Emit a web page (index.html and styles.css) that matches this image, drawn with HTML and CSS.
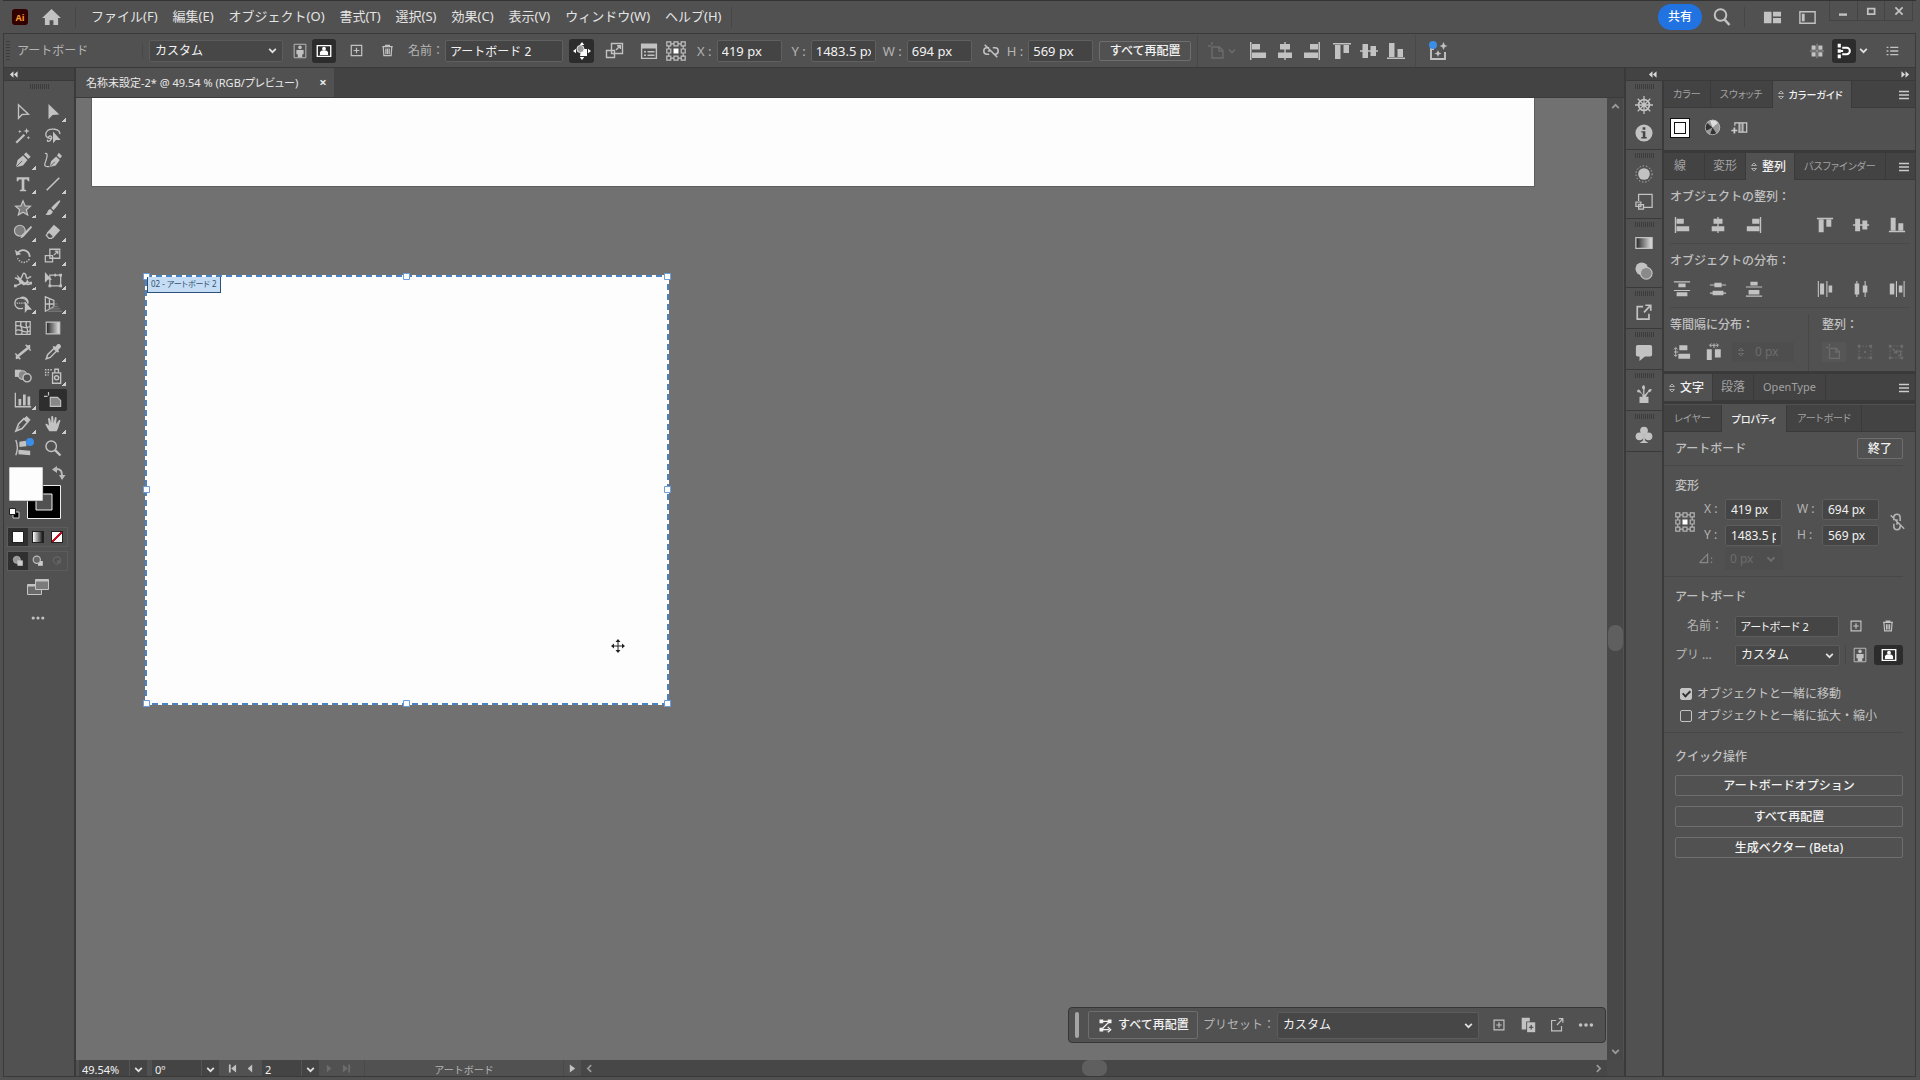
FILE: index.html
```html
<!DOCTYPE html>
<html lang="ja">
<head>
<meta charset="utf-8">
<title>名称未設定-2</title>
<link rel="stylesheet" href="styles.css">
</head>
<body>
<svg class="sprite" aria-hidden="true">
  <defs>
    <linearGradient id="fade"><stop offset="0" stop-color="#222"/><stop offset="1" stop-color="#e6e6e6"/></linearGradient>
  </defs>
  <symbol id="chev" viewBox="0 0 10 10"><path d="M2 3.5l3 3 3-3" fill="none" stroke="currentColor" stroke-width="1.6"/></symbol>
  <symbol id="plus" viewBox="0 0 20 20"><path d="M4.500 4.500h11v11h-11zM10 7v6M7 10h6" fill="none" stroke="currentColor" stroke-width="1.300"/></symbol>
  <symbol id="trash" viewBox="0 0 20 20"><path d="M4.500 6h11M8 6V4.500h4V6M5.500 6l.7 9.500h7.600l.7-9.500M8.300 8v6M10 8v6M11.800 8v6" fill="none" stroke="currentColor" stroke-width="1.300"/></symbol>
  <symbol id="portrait" viewBox="0 0 20 20"><path d="M3.500 2.500h13v15h-13z" fill="none" stroke="currentColor"/><circle cx="10" cy="6" r="2" fill="currentColor"/><path d="M6 9h8v4.500h-1.500V17h-5v-3.500H6z" fill="currentColor"/></symbol>
  <symbol id="landscape" viewBox="0 0 20 20"><path d="M2.500 4h15v12h-15z" fill="none" stroke="currentColor" stroke-width="1.500"/><circle cx="10" cy="7.500" r="2.100" fill="currentColor"/><path d="M5.500 14.500v-3.500l2-1.500h5l2 1.500v3.500z" fill="currentColor"/></symbol>
  <symbol id="moveart" viewBox="0 0 20 20"><path d="M10 1l2.300 3H7.700zM10 19l2.300-3H7.700zM1 10l3-2.300v4.600zM19 10l-3-2.300v4.600z" fill="currentColor"/><path d="M9 8h6v7H8z" fill="currentColor"/><circle cx="8.500" cy="8" r="3.600" fill="#999" stroke="currentColor" stroke-width=".8"/></symbol>
  <symbol id="scale" viewBox="0 0 20 20"><path d="M6.500 2.500h11v10h-11zM1.500 9.500h8v7h-8zM11 9l4-4M12 4.700h3.400V8" fill="none" stroke="currentColor" stroke-width="1.400"/></symbol>
  <symbol id="dialog" viewBox="0 0 20 20"><path d="M2 2.500h16v5H2z" fill="currentColor"/><path d="M2.600 3v14.400h14.800V3M5 10.800h2M5 14.200h2M8.500 10.800h7M8.500 14.200h7" fill="none" stroke="currentColor" stroke-width="1.400"/></symbol>
  <symbol id="refpoint" viewBox="0 0 20 20"><path d="M.8 .8h4v4h-4zM8 .8h4v4H8zM15.200 .8h4v4h-4zM.8 8h4v4h-4zM15.200 8h4v4h-4zM.8 15.200h4v4h-4zM8 15.200h4v4H8zM15.200 15.200h4v4h-4zM4.800 2.800H8M12 2.800h3.200M4.800 17.200H8M12 17.200h3.200M2.800 4.800V8M2.800 12v3.200M17.200 4.800V8M17.200 12v3.200" fill="none" stroke="currentColor" stroke-width="1.200"/><path d="M7.500 7.500h5v5h-5z" fill="#fff"/></symbol>
  <symbol id="unlink" viewBox="0 0 20 20"><path d="M8 6.500H5.500a3.500 3.500 0 0 0 0 7H8M12 6.500h2.500a3.500 3.500 0 0 1 0 7H13M6.500 10H9M3 3l14 14" fill="none" stroke="currentColor" stroke-width="1.700"/></symbol>
  <symbol id="unlinkv" viewBox="0 0 20 20"><path d="M6.500 8V5a3.500 3.500 0 0 1 7 0v4M6.500 12v3a3.500 3.500 0 0 0 7 0v-1M10 7v6M3 2.500l15 15" fill="none" stroke="currentColor" stroke-width="1.700"/></symbol>
  <symbol id="toart" viewBox="0 0 20 20"><path d="M5 1v3M1 5h3M5 6h7.500l3.500 3.500v7.500H5zM12 6v4h4" fill="none" stroke="currentColor" stroke-width="1.400"/></symbol>
  <symbol id="al" viewBox="0 0 20 20"><path d="M2 1h1.500v18H2zM4 3h8v5.500H4zM4 11.500h14V17H4z" fill="currentColor"/></symbol>
  <symbol id="ac" viewBox="0 0 20 20"><path d="M9.300 1h1.400v18H9.300zM5 3h10v5.500H5zM3 11.500h14V17H3z" fill="currentColor"/></symbol>
  <symbol id="ar" viewBox="0 0 20 20"><path d="M16.500 1H18v18h-1.500zM8 3h8v5.500H8zM2 11.500h14V17H2z" fill="currentColor"/></symbol>
  <symbol id="at" viewBox="0 0 20 20"><path d="M1 2h18v1.500H1zM3 4h5.500v14H3zM11.500 4H17v8h-5.500z" fill="currentColor"/></symbol>
  <symbol id="am" viewBox="0 0 20 20"><path d="M1 9.300h18v1.400H1zM3.500 3H9v14H3.500zM11.500 5H17v10h-5.500z" fill="currentColor"/></symbol>
  <symbol id="ab" viewBox="0 0 20 20"><path d="M1 16.500h18V18H1zM3 2h5.500v14H3zM11.500 8H17v8h-5.500z" fill="currentColor"/></symbol>
  <symbol id="dt" viewBox="0 0 20 20"><path d="M1 1.500h18v1.200H1zM1 11h18v1.200H1zM6 4h8v4H6zM4 13.500h12v4.500H4z" fill="currentColor"/></symbol>
  <symbol id="dm" viewBox="0 0 20 20"><path d="M1 5h18v1.200H1zM1 14h18v1.200H1zM6 3h8v5H6zM4 12h12v5H4z" fill="currentColor"/></symbol>
  <symbol id="db" viewBox="0 0 20 20"><path d="M1 7.200h18v1.200H1zM1 17.300h18v1.200H1zM6 2h8v4H6zM4 11h12v5H4z" fill="currentColor"/></symbol>
  <symbol id="dl" viewBox="0 0 20 20"><path d="M2 1h1.200v18H2zM11.500 1h1.200v18h-1.200zM4.500 4h4.500v12H4.500zM14 6h4v8h-4z" fill="currentColor"/></symbol>
  <symbol id="dc" viewBox="0 0 20 20"><path d="M4.800 1H6v18H4.800zM14 1h1.200v18H14zM3 4h5v12H3zM12 6h5v8h-5z" fill="currentColor"/></symbol>
  <symbol id="dr" viewBox="0 0 20 20"><path d="M8.800 1H10v18H8.800zM17.300 1h1.200v18h-1.200zM2 4h5v12H2zM12 6h4v8h-4z" fill="currentColor"/></symbol>
  <symbol id="sv" viewBox="0 0 20 20"><path d="M7 2.500h9v5.500H7zM6 12h13v5.500H6z" fill="currentColor"/><path d="M3 5.500v9M1 7l2-2 2 2M1 13l2 2 2-2M1 10h5" fill="none" stroke="currentColor"/></symbol>
  <symbol id="sh" viewBox="0 0 20 20"><path d="M2 7h5.500v12H2zM11 7h6.500v9H11z" fill="currentColor"/><path d="M5.500 2.500h9M7 .5l-2 2 2 2M13 .5l2 2-2 2M10 .5v5" fill="none" stroke="currentColor"/></symbol>
  <symbol id="dots" viewBox="0 0 20 20"><circle cx="4" cy="10" r="2" fill="currentColor"/><circle cx="10" cy="10" r="2" fill="currentColor"/><circle cx="16" cy="10" r="2" fill="currentColor"/></symbol>
  <symbol id="burger" viewBox="0 0 20 20"><path d="M5 6.500h10M5 10h10M5 13.500h10" stroke="currentColor" stroke-width="1.300"/></symbol>
  <symbol id="export" viewBox="0 0 20 20"><path d="M9 4H2.500v14h13v-6M10 10.500l6.500-7M11.500 2.500h6V8.500" fill="none" stroke="currentColor" stroke-width="1.900"/></symbol>
  <symbol id="left2" viewBox="0 0 10 10"><path d="M5 1.500v7L1 5zM9.500 1.500v7l-4-3.500z" fill="currentColor"/></symbol>
  <symbol id="right2" viewBox="0 0 10 10"><path d="M5 1.500v7L9 5zM.5 1.500v7l4-3.500z" fill="currentColor"/></symbol>
  <symbol id="updown" viewBox="0 0 8 12"><path d="M1.500 4.500L4 2l2.500 2.500zM1.500 7.500L4 10l2.500-2.500z" fill="none" stroke="currentColor"/></symbol>
  <symbol id="dotgrid" viewBox="0 0 20 20"><path d="M3.500 3.500h13v13h-13z" fill="none" stroke="currentColor" stroke-dasharray="2 1.500"/><path d="M2 2h3v3H2zM15 2h3v3h-3zM2 15h3v3H2zM15 15h3v3h-3zM9 9h2v2H9z" fill="currentColor"/></symbol>
  <symbol id="keyobj" viewBox="0 0 20 20"><path d="M3.500 3.500h13v13h-13z" fill="none" stroke="currentColor" stroke-dasharray="2 1.500"/><path d="M2 2h3v3H2zM15 2h3v3h-3zM2 15h3v3H2zM15 15h3v3h-3z" fill="currentColor"/><path d="M6 6l5 5M11 7.500V11H7.500M12 9h3v5h-3" fill="none" stroke="currentColor" stroke-width="1.500"/></symbol>
</svg>

<div class="window">
  <header class="titlebar">
    <svg class="logo" viewBox="0 0 16 16"><rect width="16" height="16" rx="3" fill="#300"/><text x="8" y="11.500" text-anchor="middle" class="logo-text">Ai</text></svg>
    <button class="ic home" aria-label="ホーム"><svg viewBox="0 0 20 18"><path d="M10 0l10 9.500h-3V17h-5v-5H8v5H3V9.500H0z" fill="currentColor"/></svg></button>
    <nav class="menu">
      <button>ファイル(F)</button><button>編集(E)</button><button>オブジェクト(O)</button><button>書式(T)</button><button>選択(S)</button><button>効果(C)</button><button>表示(V)</button><button>ウィンドウ(W)</button><button>ヘルプ(H)</button>
    </nav>
    <span class="grow"></span>
    <button class="share">共有</button>
    <button class="ic search" aria-label="検索"><svg viewBox="0 0 20 20"><circle cx="8.500" cy="8" r="5.800" fill="none" stroke="currentColor" stroke-width="2"/><path d="M12.500 12.500l5 5.500" stroke="currentColor" stroke-width="2.600"/></svg></button>
    <div class="layouts">
      <button class="ic" aria-label="ワークスペース"><svg viewBox="0 0 20 20"><path d="M1 4h8v12H1zM10.500 4H19v5h-8.500zM10.500 10.500H19V16h-8.500z" fill="currentColor"/></svg></button>
      <button class="ic" aria-label="パネル"><svg viewBox="0 0 20 20"><path d="M2 4h16v12H2z" fill="none" stroke="currentColor" stroke-width="1.500"/><path d="M4 6h3v8H4z" fill="currentColor"/></svg></button>
    </div>
    <div class="wincontrols">
      <button aria-label="最小化"><svg viewBox="0 0 20 20"><path d="M5 13h10v3H5z" fill="currentColor"/></svg></button>
      <button aria-label="最大化"><svg viewBox="0 0 20 20"><path d="M6 7h8.500v7H6z" fill="none" stroke="currentColor" stroke-width="2.200"/></svg></button>
      <button aria-label="閉じる"><svg viewBox="0 0 20 20"><path d="M5.500 5.500l9 9M14.500 5.500l-9 9" stroke="currentColor" stroke-width="2.200"/></svg></button>
    </div>
  </header>

  <div class="options">
    <span class="vgrip"></span>
    <span class="opt-title">アートボード</span>
    <div class="select preset"><select aria-label="プリセット"><option>カスタム</option></select><svg class="chev"><use href="#chev"/></svg></div>
    <div class="orient"><button class="ic" aria-label="縦"><svg><use href="#portrait"/></svg></button><button class="ic on" aria-label="横"><svg><use href="#landscape"/></svg></button></div>
    <button class="ic add" aria-label="新規"><svg><use href="#plus"/></svg></button>
    <button class="ic bin" aria-label="削除"><svg><use href="#trash"/></svg></button>
    <label class="field name">名前：<input value="アートボード 2"></label>
    <div class="opt-icons">
      <button class="ic on" aria-label="移動"><svg><use href="#moveart"/></svg></button>
      <button class="ic" aria-label="拡大"><svg><use href="#scale"/></svg></button>
      <div class="pair">
        <button class="ic" aria-label="オプション"><svg><use href="#dialog"/></svg></button>
        <button class="ic" aria-label="基準点"><svg><use href="#refpoint"/></svg></button>
      </div>
    </div>
    <div class="coords">
      <label class="field">X :<input value="419 px"></label>
      <label class="field">Y :<input value="1483.5 px"></label>
      <label class="field tight">W :<input value="694 px"></label>
      <button class="ic" aria-label="縦横比"><svg><use href="#unlink"/></svg></button>
      <label class="field tight">H :<input value="569 px"></label>
    </div>
    <button class="btn rearrange">すべて再配置</button>
    <div class="aligners">
      <button class="ic faint" aria-label="整列先"><svg><use href="#toart"/></svg><svg class="chev"><use href="#chev"/></svg></button>
      <button class="ic" aria-label="左"><svg><use href="#al"/></svg></button>
      <button class="ic" aria-label="中央"><svg><use href="#ac"/></svg></button>
      <button class="ic" aria-label="右"><svg><use href="#ar"/></svg></button>
      <button class="ic" aria-label="上"><svg><use href="#at"/></svg></button>
      <button class="ic" aria-label="中"><svg><use href="#am"/></svg></button>
      <button class="ic" aria-label="下"><svg><use href="#ab"/></svg></button>
    </div>
    <button class="ic generate" aria-label="生成"><svg viewBox="0 0 20 20"><path d="M6 8H3v10h14v-7" fill="none" stroke="currentColor" stroke-width="1.900"/><path d="M10 9l1 2.500 2.500 1-2.500 1-1 2.500-1-2.500-2.500-1 2.500-1zM15.500 1l1.300 3 2.700 1-2.700 1-1.300 3-1.300-3-2.700-1 2.700-1z" fill="currentColor"/><circle cx="5" cy="4" r="4" fill="#3b8ee8"/></svg></button>
    <span class="grow"></span>
    <div class="opt-right">
      <button class="ic" aria-label="グリッド"><svg viewBox="0 0 20 20"><path d="M4 4h4.500v4.500H4zM11.500 4H16v4.500h-4.500zM4 11.500h4.500V16H4zM11.500 11.500H16V16h-4.500z" fill="currentColor"/><path d="M10 2v16M2 10h16" stroke="currentColor" stroke-width=".7"/></svg></button>
      <button class="ic on" aria-label="スナップ"><svg viewBox="0 0 20 20"><path d="M3 2h3.500v4H3zM3 8h3.500v4H3zM3 14h3.500v4H3z" fill="currentColor"/><path d="M8 6.500h5a3.500 3.500 0 0 1 0 7H8M6 10h3" fill="none" stroke="currentColor" stroke-width="2.200"/></svg></button>
      <svg class="chev"><use href="#chev"/></svg>
      <button class="ic list" aria-label="リスト"><svg viewBox="0 0 20 20"><path d="M4 6h2M4 10h2M4 14h2M8 6h9M8 10h9M8 14h9" stroke="currentColor" stroke-width="1.500"/></svg></button>
    </div>
  </div>

  <div class="work">
    <aside class="tools">
      <div class="dock-head"><svg class="dbl"><use href="#left2"/></svg></div>
      <span class="grip"></span>
      <div class="toolgrid">
        <button aria-label="選択"><svg viewBox="0 0 20 20"><path d="M5 2v15l4-4.200 7-.3z" fill="none" stroke="currentColor" stroke-width="1.500"/></svg></button>
        <button class="more" aria-label="ダイレクト選択"><svg viewBox="0 0 20 20"><path d="M5 1v17l4.500-4.800 7.500-.4z" fill="currentColor"/></svg></button>
        <button aria-label="自動選択"><svg viewBox="0 0 20 20"><path d="M2.500 17.500l9-9" stroke="currentColor" stroke-width="2.400"/><path d="M14 1l.9 2.600L17.500 4.500l-2.600.9L14 8l-.9-2.600-2.600-.9 2.600-.9zM6.500 3l.6 1.400 1.400.6-1.400.6-.6 1.400-.6-1.400L4.500 5l1.400-.6zM16 10l.6 1.400 1.400.6-1.400.6-.6 1.400-.6-1.400L14 12l1.400-.6z" fill="currentColor"/></svg></button>
        <button aria-label="なげなわ"><svg viewBox="0 0 20 20"><path d="M9 12.500C4 13.500 1.500 10.500 2 7.500 3 3 8 2 12 2.500c4 .5 6 3 5.500 5.500M4.500 12c2-4 5-1.500 3.500 1.500S3 17 4 14" fill="none" stroke="currentColor" stroke-width="1.500"/><path d="M10 5v13l3.300-3.600h5.200z" fill="currentColor"/></svg></button>
        <button class="more" aria-label="ペン"><svg viewBox="0 0 20 20"><path d="M2 18l2-8 6-5 5 5-5 6zM11 4l2.500-2.500 5 5L16 9z" fill="currentColor"/><path d="M2.500 17.500L9 11" stroke="#515151"/></svg></button>
        <button aria-label="曲線"><svg viewBox="0 0 20 20"><path d="M6 18l2-7 5.500-5 4 4-4.500 6zM14.500 5l2-3L20 5.500l-2.200 2.800z" fill="currentColor"/><path d="M1 3c5-2 1 8 0 11s2 4 5 3" fill="none" stroke="currentColor" stroke-width="1.400"/><path d="M6.500 17.500L12 12" stroke="#515151"/></svg></button>
        <button class="more" aria-label="文字"><svg viewBox="0 0 20 20"><path d="M3 2.500h14V7h-1.500L14.500 5h-3v11l2 .7V18h-7v-1.300l2-.7V5h-3l-1 2H3z" fill="currentColor"/></svg></button>
        <button class="more" aria-label="直線"><svg viewBox="0 0 20 20"><path d="M3 17L17 3" stroke="currentColor" stroke-width="1.800"/></svg></button>
        <button class="more" aria-label="スター"><svg viewBox="0 0 20 20"><path d="M10 2l2.300 5.600 6 .4-4.600 3.900 1.500 5.900L10 14.600l-5.200 3.200 1.500-5.900L1.700 8l6-.4z" fill="#7c7c7c" stroke="currentColor" stroke-width="1.300"/></svg></button>
        <button class="more" aria-label="ブラシ"><svg viewBox="0 0 20 20"><path d="M18 1.500c1 1-5 9-7.500 11L8 10C10 7 17 .8 18 1.500zM7 11l2.800 2.800C9 17.500 5 18.500 1.500 17.500 4 16 3.500 12 7 11z" fill="currentColor"/></svg></button>
        <button class="more" aria-label="Shaper"><svg viewBox="0 0 20 20"><circle cx="6.500" cy="8.500" r="6" fill="#7c7c7c" stroke="currentColor" stroke-width="1.300"/><path d="M19 3l1 2-8 9c-1 1.500-3 3-5 3 1-1 1-3 2.500-4.500z" fill="currentColor"/></svg></button>
        <button class="more" aria-label="消しゴム"><svg viewBox="0 0 20 20"><path d="M11 2l7 6-8 9-7-6z" fill="currentColor"/><path d="M5.500 10l5 4.500-2 2.500H5.500L2.500 13.500z" fill="#515151" stroke="currentColor" stroke-width="1.400"/></svg></button>
        <button class="more" aria-label="回転"><svg viewBox="0 0 20 20"><path d="M4 7c4-6 13-4 13.500 4" fill="none" stroke="currentColor" stroke-width="2"/><path d="M1 3l1.500 6.500L8 8z" fill="currentColor"/><path d="M17 13.500c-3 5-10 5-13-1" fill="none" stroke="currentColor" stroke-width="1.600" stroke-dasharray="1.500 1.500"/></svg></button>
        <button class="more" aria-label="拡大縮小"><svg><use href="#scale"/></svg></button>
        <button class="more" aria-label="線幅"><svg viewBox="0 0 20 20"><path d="M1 8c3-1 3 3 6 1S9 1 12 3s0 5 3 5 2-3 4-1M2 16c4 0 4-3 8-3s4 4 8 1" fill="none" stroke="currentColor" stroke-width="1.600"/><path d="M3 4l9 9c2-1 3-3 2-5l3 5-6 3-5-3z" fill="currentColor"/><path d="M0 15h3v3H0zM17 12h3v3h-3z" fill="currentColor"/></svg></button>
        <button class="more" aria-label="自由変形"><svg viewBox="0 0 20 20"><path d="M6.500 4.500h12v12h-12z" fill="none" stroke="currentColor" stroke-width="1.400"/><path d="M1 1v12l3.500-3.500L9 10zM17 3h3v3h-3zM17 15h3v3h-3zM5 15h3v3H5zM11.500 3h2v3h-2z" fill="currentColor"/></svg></button>
        <button class="more" aria-label="シェイプ形成"><svg viewBox="0 0 20 20"><path d="M7 3.500c4-3 9 1 8.500 6M10 14.500c-5 2-9-1-9-5C1 6 3 3.500 7 3.500s8 2 8.500 6" fill="none" stroke="currentColor" stroke-width="1.500"/><path d="M3 9h9" stroke="currentColor" stroke-width="1.500" stroke-dasharray="1.500 1"/><path d="M12 7v13l3-3.500h5z" fill="currentColor"/></svg></button>
        <button class="more" aria-label="遠近グリッド"><svg viewBox="0 0 20 20"><path d="M1.500 2v16L11 13V6zM1.500 10H11M6 4v11.500" fill="none" stroke="currentColor" stroke-width="1.400"/><path d="M12 10h3M9 13h7M5 15.500h13M4 18h16" stroke="#888"/></svg></button>
        <button aria-label="メッシュ"><svg viewBox="0 0 20 20"><path d="M2 3h16v14H2zM8 3c-3 5 4 9 0 14M14 3c-3 5 4 9 0 14M2 8c5-3 9 5 16 0M2 13c5-4 9 5 16 0" fill="none" stroke="currentColor" stroke-width="1.400"/></svg></button>
        <button aria-label="グラデーション"><svg viewBox="0 0 20 20"><path d="M2.500 3.500h15v13h-15z" fill="url(#fade)" stroke="currentColor" stroke-width="1.300"/></svg></button>
        <button aria-label="寸法"><svg viewBox="0 0 20 20"><path d="M4.500 14.500l11-9" stroke="currentColor" stroke-width="3"/><path d="M1.500 11.500l5.500 6.500M13 2l5.500 6.500" stroke="currentColor" stroke-width="1.600"/><path d="M2 18v-5l4.500 4zM18 2v5l-4.500-4z" fill="currentColor"/></svg></button>
        <button class="more" aria-label="スポイト"><svg viewBox="0 0 20 20"><path d="M2.500 17.500L4 13l7-7 3 3-7 7z" fill="none" stroke="currentColor" stroke-width="1.600"/><path d="M9.500 4.500l1.200-1.200 1.800 1L15 1.500c2-1.500 5 1.500 3.500 3.500L15.800 7.700l1 1.800-1.300 1.300z" fill="currentColor"/></svg></button>
        <button aria-label="ブレンド"><svg viewBox="0 0 20 20"><path d="M1 3h7v8H1z" fill="currentColor"/><circle cx="9.500" cy="9" r="4.800" fill="#888" stroke="currentColor" stroke-width="1.200"/><circle cx="14.500" cy="12" r="4.500" fill="#515151" stroke="currentColor" stroke-width="1.600"/></svg></button>
        <button class="more" aria-label="シンボルスプレー"><svg viewBox="0 0 20 20"><path d="M9.500 6.500h9V18h-9zM12 6V2.500h4V6" fill="none" stroke="currentColor" stroke-width="1.500"/><circle cx="14" cy="12" r="2.300" fill="none" stroke="currentColor" stroke-width="1.600"/><path d="M1 3h9M1 6h6M1 9h4" stroke="currentColor" stroke-width="1.700" stroke-dasharray="1.700 1.300"/></svg></button>
        <button class="more" aria-label="グラフ"><svg viewBox="0 0 20 20"><path d="M1.500 2v15.500H19" fill="none" stroke="currentColor" stroke-width="1.400"/><path d="M5 9h3v7H5zM10 4h3v12h-3zM15 6h3v10h-3z" fill="currentColor"/></svg></button>
        <button class="on" aria-label="アートボード"><svg viewBox="0 0 20 20"><path d="M7 7h8l3.500 3.500v6.500H7z" fill="#888" stroke="currentColor" stroke-width="1.300"/><path d="M5 1v4M0 6h4" stroke="currentColor" stroke-width="1.300"/></svg></button>
        <button class="more" aria-label="スライス"><svg viewBox="0 0 20 20"><path d="M2 18l3-8 6-6 4 4-6 7z" fill="none" stroke="currentColor" stroke-width="1.700"/><path d="M11.500 4L14 1.500l4 4L15.500 8zM1.500 18.500l5-6" fill="currentColor" stroke="currentColor"/></svg></button>
        <button class="more" aria-label="手のひら"><svg viewBox="0 0 20 20"><path d="M6 18C4 15 2 12 1.500 10c1.500-1 3 .5 4 2L4.500 4.500c0-1.500 2-1.500 2.300 0L8 9V2.500c0-1.700 2.200-1.700 2.300 0L10.700 9 12 3c.4-1.500 2.300-1 2 .7L13.500 10 16.300 6c1-1.200 2.400-.3 1.700 1.200-1.500 3-1.500 7.500-4 10.800z" fill="currentColor"/></svg></button>
        <button class="badge" aria-label="リドロー"><svg viewBox="0 0 20 20"><path d="M2 1c2 5 2 12 0 17" fill="none" stroke="currentColor" stroke-width="1.500"/><path d="M6 3l7-1 1 6-8 1zM5 12l13 1v5l-13-1z" fill="currentColor"/></svg></button>
        <button aria-label="ズーム"><svg viewBox="0 0 20 20"><circle cx="8" cy="8" r="5.800" fill="none" stroke="currentColor" stroke-width="1.600"/><path d="M12.300 12.300l6 6" stroke="currentColor" stroke-width="2.600"/></svg></button>
      </div>
      <svg class="fillstroke" viewBox="0 0 66 58"><path d="M24.500 21.500h33v33h-33z" fill="#000" stroke="#eee"/><path d="M33 30h16v16H33z" fill="#515151" stroke="#eee"/><path d="M6 3h34v34H6z" fill="#fdfdfd" stroke="#555" stroke-width=".6"/><path d="M53 5c5 0 6 2 6 7" fill="none" stroke="#bbb" stroke-width="2"/><path d="M54 2v7l-5-3.500zM56 11h6.500L59 16z" fill="#bbb"/><path d="M10 48h6v6h-6z" fill="#000" stroke="#ccc"/><path d="M6.500 44.500h6v6h-6z" fill="#fff" stroke="#222"/></svg>
      <div class="trio"><button class="on" aria-label="カラー"><i class="sw white"></i></button><button aria-label="グラデーション"><i class="sw grad"></i></button><button aria-label="なし"><i class="sw none"></i></button></div>
      <div class="trio"><button class="on" aria-label="標準描画"><svg viewBox="0 0 20 20"><circle cx="8" cy="8" r="6" fill="#999" stroke="#bbb"/><path d="M9 9h9v9H9z" fill="#ccc"/></svg></button><button aria-label="背面描画"><svg viewBox="0 0 20 20"><path d="M10 10h8v8h-8z" fill="#ccc"/><circle cx="8" cy="8" r="6" fill="#666" stroke="#bbb" stroke-width="2"/></svg></button><button aria-label="内側描画"><svg viewBox="0 0 20 20"><circle cx="10" cy="9" r="6" fill="none" stroke="#666" stroke-width="2"/><path d="M10 9h6v4h-6z" fill="#666"/></svg></button></div>
      <button class="screen" aria-label="スクリーンモード"><svg viewBox="0 0 24 18"><path d="M1.500 6.500h14v10h-14z" fill="#6b6b6b" stroke="#c4c4c4"/><path d="M9.500 1.500h13v10h-13z" fill="#7b7b7b" stroke="#c4c4c4"/><path d="M9.500 2.500h13M2 7.500h7" stroke="#c4c4c4" stroke-width="2"/></svg></button>
      <button class="screen dotsbtn" aria-label="ツールバーを編集"><svg><use href="#dots"/></svg></button>
    </aside>

    <main class="doc">
      <div class="tabs"><button class="doctab">名称未設定-2* @ 49.54 % (RGB/プレビュー)<b>×</b></button></div>
      <div class="stage">
        <div class="canvas">
          <div class="board one"></div>
          <svg class="board two" viewBox="0 0 528 434">
            <path d="M3 3h522v428H3z" fill="#fdfdfd"/>
            <path d="M3 3h522v428H3z" fill="none" stroke="#fff" stroke-width="2"/>
            <path d="M3 3h522v428H3z" fill="none" stroke="#4a83c3" stroke-width="2" stroke-dasharray="6 4"/>
            <g fill="#fff" stroke="#6a9ddb"><path d="M.5.5h6v6h-6zM260.500.5h6v6h-6zM521.500.5h6v6h-6zM.5 213.500h6v6h-6zM521.500 213.500h6v6h-6zM.5 427.500h6v6h-6zM260.500 427.500h6v6h-6zM521.500 427.500h6v6h-6z"/></g>
          </svg>
          <span class="boardname">02 - アートボード 2</span>
          <svg class="cursor" viewBox="0 0 14 14"><path d="M7 1v12M1 7h12" stroke="#222"/><path d="M7 0l2.500 3h-5zM7 14l2.500-3h-5zM0 7l3-2.500v5zM14 7l-3-2.500v5z" fill="#222"/></svg>
          <div class="taskbar">
            <span class="handle"></span>
            <button class="btn"><svg viewBox="0 0 20 20"><path d="M2 2h5v5H2zM13 2h5v5h-5zM2 13h5v5H2z" fill="currentColor"/><path d="M6 4.500h8M14 6l-8 8M6 15.500h9M13 12l4 3.500-4 3.500" fill="none" stroke="currentColor" stroke-width="1.600"/></svg>すべて再配置</button>
            <label class="field">プリセット：<span class="select"><select><option>カスタム</option></select><svg class="chev"><use href="#chev"/></svg></span></label>
            <div class="taskicons">
              <button class="ic" aria-label="新規"><svg><use href="#plus"/></svg></button>
              <button class="ic" aria-label="複製"><svg viewBox="0 0 20 20"><path d="M3 2h9v4H8v9H3z" fill="currentColor"/><path d="M9 7h9v11H9z" fill="currentColor"/><path d="M13.500 10v5M11 12.500h5" stroke="#444" stroke-width="1.300"/></svg></button>
              <button class="ic" aria-label="書き出し"><svg viewBox="0 0 20 20"><path d="M9 5H4v11.500h11V11M10 10l6-6.500M12 3h4.500v4.500" fill="none" stroke="currentColor" stroke-width="1.300"/></svg></button>
              <button class="ic" aria-label="その他"><svg><use href="#dots"/></svg></button>
            </div>
          </div>
        </div>
        <div class="vscroll"><svg class="chev up"><use href="#chev"/></svg><span></span><svg class="chev"><use href="#chev"/></svg></div>
      </div>
      <div class="status">
        <div class="stat zoom"><input aria-label="ズーム" value="49.54%"><svg class="chev"><use href="#chev"/></svg></div>
        <div class="stat angle"><input aria-label="回転" value="0º"><svg class="chev"><use href="#chev"/></svg></div>
        <button aria-label="最初"><svg viewBox="0 0 10 10"><path d="M1 .5h2v9H1zM9 .5v9L3.500 5z" fill="currentColor"/></svg></button>
        <button aria-label="前"><svg viewBox="0 0 10 10"><path d="M8 .5v9L3 5z" fill="currentColor"/></svg></button>
        <div class="stat page"><input aria-label="アートボード" value="2"><svg class="chev"><use href="#chev"/></svg></div>
        <button class="faint" aria-label="次"><svg viewBox="0 0 10 10"><path d="M2 .5v9L7 5z" fill="currentColor"/></svg></button>
        <button class="faint" aria-label="最後"><svg viewBox="0 0 10 10"><path d="M7 .5h2v9H7zM1 .5v9L6.500 5z" fill="currentColor"/></svg></button>
        <span class="mode">アートボード</span>
        <button aria-label="表示"><svg viewBox="0 0 10 10"><path d="M2 .5v9L8 5z" fill="currentColor"/></svg></button>
        <div class="hscroll"><svg class="chev lt"><use href="#chev"/></svg><span></span><svg class="chev rt"><use href="#chev"/></svg></div>
        <span class="corner"></span>
      </div>
    </main>

    <aside class="dock">
      <div class="dock-head"><svg class="dbl"><use href="#left2"/></svg><span class="grow"></span><svg class="dbl"><use href="#right2"/></svg></div>
      <div class="dockcols">
        <div class="iconcol">
          <div class="icongroup"><span class="grip"></span>
            <button aria-label="ナビゲーター"><svg viewBox="0 0 20 20"><circle cx="10" cy="10" r="6" fill="none" stroke="currentColor" stroke-width="2"/><circle cx="10" cy="10" r="2.400" fill="currentColor"/><path d="M10 0v20M0 10h20M3 3l14 14M17 3L3 17" stroke="currentColor" stroke-width="1.400"/></svg></button>
            <button aria-label="情報"><svg viewBox="0 0 20 20"><circle cx="10" cy="10" r="9.500" fill="currentColor"/><path d="M8.500 3.500h3v3h-3zM7 8h4.500v6.500H13V16H7v-1.500h1.700v-5H7z" fill="#444"/></svg></button></div>
          <div class="icongroup"><span class="grip"></span>
            <button aria-label="アピアランス"><svg viewBox="0 0 20 20"><circle cx="10" cy="10" r="6.500" fill="currentColor"/><circle cx="10" cy="10" r="9" fill="none" stroke="currentColor" stroke-dasharray="1.500 2.200"/></svg></button>
            <button aria-label="グラフィックスタイル"><svg viewBox="0 0 20 20"><path d="M4 9V1.500h15V16H10" fill="none" stroke="currentColor" stroke-width="1.400"/><path d="M1 10h5.500v5H1zM4 13h5.500v5H4z" fill="#666" stroke="currentColor" stroke-width="1.300"/></svg></button></div>
          <div class="icongroup"><span class="grip"></span>
            <button aria-label="グラデーション"><svg viewBox="0 0 20 20"><path d="M1 4h18v12H1z" fill="url(#fade)" stroke="currentColor" stroke-width="1.500"/></svg></button>
            <button aria-label="透明"><svg viewBox="0 0 20 20"><circle cx="7.500" cy="7.500" r="7" fill="currentColor"/><circle cx="12.500" cy="12.500" r="6.500" fill="#8a8a8a" stroke="currentColor" stroke-width="1.300"/></svg></button></div>
          <div class="icongroup"><span class="grip"></span><button aria-label="書き出し"><svg><use href="#export"/></svg></button></div>
          <div class="icongroup"><span class="grip"></span><button aria-label="コメント"><svg viewBox="0 0 20 20"><path d="M3 1h14a2 2 0 0 1 2 2v9a2 2 0 0 1-2 2h-6l-6 5v-5H3a2 2 0 0 1-2-2V3a2 2 0 0 1 2-2z" fill="currentColor"/></svg></button></div>
          <div class="icongroup"><span class="grip"></span><button aria-label="ブラシ"><svg viewBox="0 0 20 20"><path d="M5 13h10v7H5zM8.500 13C8 9 6 8 2.500 8 2 5 4 4 5.500 6L9 11V5C7 3 8 1 9.500 0 11 1 12 3 10.500 5v6l4-4c0-2 2-3 4-2.500 0 2-1.500 4-3.500 3.500L12 13z" fill="currentColor"/></svg></button></div>
          <div class="icongroup"><span class="grip"></span><button aria-label="シンボル"><svg viewBox="0 0 20 20"><circle cx="10" cy="5" r="4.300" fill="currentColor"/><circle cx="5" cy="11.500" r="4.300" fill="currentColor"/><circle cx="15" cy="11.500" r="4.300" fill="currentColor"/><path d="M9 9h2v7l4 3H5l4-3z" fill="currentColor"/></svg></button></div>
        </div>

        <div class="panels">
          <div class="ptabs"><button>カラー</button><button>スウォッチ</button><button class="on"><svg><use href="#updown"/></svg>カラーガイド</button><svg class="burger"><use href="#burger"/></svg></div>
          <div class="guide">
            <i class="base"></i>
            <svg viewBox="0 0 20 20"><circle cx="10" cy="10" r="9" fill="#999"/><path d="M10 10L3 4a9 9 0 0 0-1 10zM10 10l-3 8.500a9 9 0 0 0 8-1z" fill="#333"/><path d="M10 10L7 1.500A9 9 0 0 1 17 4z" fill="#ddd"/><circle cx="10" cy="10" r="8.500" fill="none" stroke="#bbb"/></svg>
            <svg viewBox="0 0 20 20"><path d="M9.500 4.500H14v11H9.500z" fill="#888"/><path d="M4.500 8V4.500h14v11h-10M9.500 5v10M14 5v10" fill="none" stroke="currentColor" stroke-width="1.400"/><path d="M4 10v7M.5 13.500h7" stroke="currentColor" stroke-width="2"/></svg>
          </div>

          <div class="ptabs"><button class="kanji line">線</button><button class="kanji">変形</button><button class="on kanji"><svg><use href="#updown"/></svg>整列</button><button>パスファインダー</button><svg class="burger"><use href="#burger"/></svg></div>
          <div class="alignpanel">
            <section><h3>オブジェクトの整列：</h3><div class="six"><button aria-label="左"><svg><use href="#al"/></svg></button><button aria-label="中央"><svg><use href="#ac"/></svg></button><button aria-label="右"><svg><use href="#ar"/></svg></button><button aria-label="上"><svg><use href="#at"/></svg></button><button aria-label="中"><svg><use href="#am"/></svg></button><button aria-label="下"><svg><use href="#ab"/></svg></button></div></section>
            <section><h3>オブジェクトの分布：</h3><div class="six"><button aria-label="上端"><svg><use href="#dt"/></svg></button><button aria-label="垂直"><svg><use href="#dm"/></svg></button><button aria-label="下端"><svg><use href="#db"/></svg></button><button aria-label="左端"><svg><use href="#dl"/></svg></button><button aria-label="水平"><svg><use href="#dc"/></svg></button><button aria-label="右端"><svg><use href="#dr"/></svg></button></div></section>
            <section class="split">
              <div class="space"><h3>等間隔に分布：</h3><div class="row"><button aria-label="垂直間隔"><svg><use href="#sv"/></svg></button><button aria-label="水平間隔"><svg><use href="#sh"/></svg></button><span class="spin"><svg><use href="#updown"/></svg><input aria-label="間隔" value="0 px" disabled></span></div></div>
              <div class="target"><h3>整列：</h3><div class="row faint"><button class="boxed" aria-label="アートボード"><svg><use href="#toart"/></svg></button><button aria-label="選択範囲"><svg><use href="#dotgrid"/></svg></button><button aria-label="キーオブジェクト"><svg><use href="#keyobj"/></svg></button></div></div>
            </section>
          </div>

          <div class="ptabs solo"><button class="on kanji"><svg><use href="#updown"/></svg>文字</button><button class="kanji">段落</button><button class="latin">OpenType</button><svg class="burger"><use href="#burger"/></svg></div>
          <div class="ptabs last"><button>レイヤー</button><button class="on">プロパティ</button><button>アートボード</button></div>
          <div class="props">
            <section class="phead"><h3>アートボード</h3><button class="btn">終了</button></section>
            <section class="transform">
              <h3>変形</h3>
              <div class="tgrid">
                <svg class="ref"><use href="#refpoint"/></svg>
                <div class="xy">
                  <label for="px">X :</label><input id="px" value="419 px"><label for="pw">W :</label><input id="pw" value="694 px">
                  <label for="py">Y :</label><input id="py" value="1483.5 px"><label for="ph">H :</label><input id="ph" value="569 px">
                </div>
                <svg class="lnk"><use href="#unlinkv"/></svg>
              </div>
              <div class="angrow"><svg viewBox="0 0 20 20"><path d="M2 14.500h11M2 14.500L12 4v10M17 8v2M17 13v2" fill="none" stroke="currentColor" stroke-width="1.500"/></svg><span class="rot"><input aria-label="角度" value="0 px" disabled><svg class="chev"><use href="#chev"/></svg></span></div>
            </section>
            <section class="artboard">
              <h3>アートボード</h3>
              <div class="arow"><label for="an" class="an">名前：</label><input id="an" value="アートボード 2"><button class="ic" aria-label="新規"><svg><use href="#plus"/></svg></button><button class="ic" aria-label="削除"><svg><use href="#trash"/></svg></button></div>
              <div class="arow"><label for="ap">プリ ...</label><span class="select"><select id="ap"><option>カスタム</option></select><svg class="chev"><use href="#chev"/></svg></span><button class="ic" aria-label="縦"><svg><use href="#portrait"/></svg></button><button class="ic on" aria-label="横"><svg><use href="#landscape"/></svg></button></div>
              <label class="check"><input type="checkbox" checked>オブジェクトと一緒に移動</label>
              <label class="check"><input type="checkbox">オブジェクトと一緒に拡大・縮小</label>
            </section>
            <section class="quick"><h3>クイック操作</h3><button class="btn">アートボードオプション</button><button class="btn">すべて再配置</button><button class="btn">生成ベクター (Beta)</button></section>
          </div>
        </div>
      </div>
    </aside>
  </div>
</div>
</body>
</html>
```
FILE: styles.css
```css
:root {
  --bg: #515151;
  --dark: #434343;
  --line: #3a3a3a;
  --icon: #c2c2c2;
  --dim: #b4b4b4;
  --text: #f2f2f2;
}
* { box-sizing: border-box; }
body {
  margin: 0;
  background: var(--bg);
  color: var(--dim);
  font: 12px/16px "Noto Sans", "Noto Sans CJK JP", sans-serif;
}
button, input, select { font: inherit; color: inherit; margin: 0; padding: 0; border: 0; background: none; border-radius: 0; }
button { flex: none; white-space: nowrap; color: var(--icon); }
input, select { color: var(--text); min-width: 0; }
select { appearance: none; width: 100%; height: 100%; padding: 0 5px; }
svg { display: block; flex: none; width: 18px; height: 18px; }
h3 { margin: 0; font-size: 12px; font-weight: 500; line-height: 16px; color: #c0c0c0; }
.sprite { position: absolute; width: 0; height: 0; }
.grow { flex: 1; }
.chev { width: 11px; height: 11px; color: #e0e0e0; }
.faint, .faint button, .faint .chev { color: #6c6c6c; }
.ic { display: flex; align-items: center; justify-content: center; }
.ic.on { background: #2c2c2c; color: #fff; border-radius: 3px; }
.btn { border: 1px solid #6e6e6e; border-radius: 2px; color: var(--text); font-weight: 500; }
.select { display: flex; align-items: center; position: relative; background: #474747; border: 1px solid #5c5c5c; border-radius: 2px; }
.select .chev { position: absolute; right: 4px; pointer-events: none; }

.window { display: flex; flex-direction: column; min-height: 100vh; border: solid var(--bg); border-width: 0 4px 3px 3px; }

/* title bar */
.titlebar { display: flex; align-items: center; height: 34px; padding-left: 9px; border-top: 1px solid #333; border-bottom: 1px solid var(--line); }
.logo { width: 16px; height: 16px; }
.logo-text { font: bold 9px "Open Sans", sans-serif; fill: #f79a2b; }
.home { margin-left: 14px; }
.home svg { width: 19px; height: 17px; }
.menu { display: flex; gap: 15px; margin-left: 14px; padding: 0 10px 3px 15px; border: solid #464646; border-width: 0 1px; }
.menu button { font-size: 13px; line-height: 18px; color: #e4e4e4; }
.share { width: 44px; height: 26px; border-radius: 13px; background: #2173e2; color: #fff; font-weight: 500; }
.search { margin-left: 10px; padding-right: 12px; border-right: 1px solid #464646; }
.search svg { width: 20px; height: 20px; }
.layouts { display: flex; gap: 16px; margin: 0 12px 0 18px; }
.layouts svg { width: 19px; height: 19px; }
.wincontrols { display: flex; align-self: flex-start; width: 84px; height: 20px; margin-right: 3px; border: solid #444; border-width: 0 1px 1px; }
.wincontrols button { flex: 1; display: flex; align-items: center; justify-content: center; border-right: 1px solid #444; }
.wincontrols button:last-child { border: 0; }
.wincontrols svg { width: 16px; height: 16px; }

/* control bar */
.options { display: flex; align-items: center; height: 34px; border: solid var(--line); border-width: 0 1px 1px; }
.vgrip { width: 4px; height: 20px; margin-left: 2px; background: repeating-linear-gradient(#3c3c3c 0 1px, transparent 1px 3px); }
.opt-title { width: 126px; margin: 0 6px 0 7px; border-right: 1px solid #484848; }
.preset { width: 134px; height: 22px; }
.orient { display: flex; margin-left: 5px; }
.orient .ic { width: 24px; height: 24px; }
.add { margin-left: 11px; }
.bin { margin-left: 12px; }
.add svg, .bin svg { width: 19px; height: 19px; }
.field { display: flex; align-items: center; white-space: nowrap; flex: none; }
.field input { width: 65px; height: 22px; padding: 0 4px; font-size: 13px; background: #444; border: 1px solid #606060; border-radius: 2px; }
.name { margin-left: 11px; }
.name input { width: 118px; font-size: 12px; margin-left: 1px; }
.opt-icons { display: flex; align-items: center; gap: 14px; margin-left: 6px; }
.opt-icons .on { width: 25px; height: 24px; margin-right: -3px; }
.opt-icons svg { width: 20px; height: 20px; }
.pair { display: flex; gap: 7px; }
.coords { display: flex; align-items: center; gap: 10px; margin-left: 11px; }
.coords .field { font-size: 13px; gap: 5px; }
.coords .tight { margin-left: -3px; }
.rearrange { width: 92px; height: 20px; margin-left: 6px; line-height: 16px; }
.aligners { display: flex; gap: 7px; margin-left: 6px; padding: 6px 9px; border: solid #484848; border-width: 0 1px; }
.aligners svg, .generate svg { width: 20px; height: 20px; }
.aligners .chev { width: 10px; }
.aligners .faint { margin-right: 4px; }
.aligners .ic:nth-child(5) { margin-left: 3px; }
.generate { margin-left: 12px; }
.opt-right { display: flex; align-items: center; gap: 4px; padding-right: 14px; }
.opt-right .on { width: 24px; height: 24px; margin-left: 2px; }
.opt-right .chev { margin-left: -2px; }
.list { margin-left: 10px; }

/* work area */
.work { flex: 1; display: flex; border: solid var(--line); border-width: 0 1px 1px; }
.dock-head { display: flex; align-items: center; height: 13px; padding: 0 5px; background: var(--dark); border-bottom: 1px solid var(--line); }
.dbl { width: 9px; height: 9px; color: #d8d8d8; }
.grip { display: block; width: 19px; height: 5px; margin: 3px auto; background: repeating-linear-gradient(90deg, #3c3c3c 0 1px, transparent 1px 2px); }
.tools { width: 72px; flex: none; border-right: 2px solid var(--line); }
.tools > .grip { margin-bottom: 11px; }
.toolgrid { display: grid; grid-template-columns: 30px 30px; grid-auto-rows: 24px; margin-left: 4px; }
.toolgrid button { display: flex; align-items: center; justify-content: center; position: relative; }
.toolgrid .on { width: 28px; height: 22px; margin: 1px; background: #2e2e2e; border-radius: 2px; }
.more::after { content: ""; position: absolute; right: 2px; bottom: 2px; width: 4px; height: 4px; background: linear-gradient(135deg, transparent 50%, #ccc 50%); }
.badge::after { content: ""; position: absolute; right: 4px; top: 2px; width: 8px; height: 8px; border-radius: 50%; background: #3b8ee8; }
.fillstroke { width: 66px; height: 58px; margin: 4px 0 6px -1px; }
.trio { display: flex; width: 59px; height: 18px; margin: 0 0 6px 4px; outline: 1px solid #5c5c5c; }
.trio button { flex: 1; display: flex; align-items: center; justify-content: center; }
.trio .on { background: #303030; }
.trio svg { width: 12px; height: 12px; }
.sw { width: 12px; height: 12px; border: 1px solid #222; }
.sw.white { background: #fff; }
.sw.grad { background: linear-gradient(90deg, #fff, #111); }
.sw.none { background: linear-gradient(315deg, #fff 42%, #c01020 42% 58%, #fff 58%); }
.screen { display: block; margin: 8px auto 0 22px; }
.screen svg { width: 24px; height: 18px; }
.dotsbtn { margin-top: 14px; }
.dotsbtn svg { height: 16px; }

/* document */
.doc { flex: 1; min-width: 0; display: flex; flex-direction: column; }
.tabs { height: 29px; background: var(--dark); }
.doctab { height: 29px; padding: 0 7px 0 10px; background: var(--bg); color: #e8e8e8; font-size: 11px; font-feature-settings: "palt"; }
.doctab b { margin-left: 21px; font-size: 13px; }
.stage { flex: 1; display: flex; border-top: 1px solid var(--line); }
.canvas { flex: 1; position: relative; overflow: hidden; background: #717171; }
.board { position: absolute; }
.one { left: 15px; right: 72px; top: 0; height: 89px; background: #fdfdfd; border: solid #5e5e5e; border-width: 0 1px 1px; }
.two { left: 67px; top: 175px; width: 528px; height: 434px; }
.boardname { position: absolute; left: 71px; top: 179px; width: 74px; height: 16px; padding-left: 3px; background: #c4ddf5; border: 1px solid #2c5078; border-top: 0; color: #34506e; font-size: 8px; line-height: 14px; font-feature-settings: "palt"; white-space: nowrap; }
.cursor { position: absolute; left: 535px; top: 541px; width: 14px; height: 14px; }
.taskbar { position: absolute; right: 1px; bottom: 17px; display: flex; align-items: center; width: 538px; height: 36px; padding: 0 10px 0 6px; background: var(--bg); border: 1px solid #363636; border-radius: 4px; }
.handle { width: 4px; height: 26px; border-radius: 2px; background: #a5a5a5; }
.taskbar .btn { display: flex; align-items: center; gap: 5px; width: 110px; height: 28px; margin: 0 5px 0 9px; padding-left: 9px; }
.taskbar .btn svg { width: 15px; height: 15px; }
.taskbar .select { width: 202px; height: 27px; margin-left: 2px; }
.taskicons { display: flex; gap: 11px; margin-left: auto; }
.vscroll { width: 17px; display: flex; flex-direction: column; align-items: center; padding: 3px 0; background: #484848; border-right: 1px solid var(--bg); }
.vscroll .chev, .hscroll .chev { color: #9a9a9a; }
.vscroll span { width: 15px; height: 26px; margin: 513px 0 auto; border-radius: 7px; background: #5f5f5f; }
.up { transform: rotate(180deg); }
.lt { transform: rotate(90deg); }
.rt { transform: rotate(-90deg); }
.status { display: flex; height: 16px; background: var(--bg); }
.status > button { width: 17px; display: flex; align-items: center; justify-content: center; }
.status > button svg { width: 9px; height: 9px; }
.stat { display: flex; align-items: center; background: #444; }
.stat input { height: 16px; padding: 3px 0 0 3px; border-right: 1px solid #555; font-size: 11px; line-height: 13px; }
.stat .chev { margin: 2px 3px 0; }
.zoom input { width: 51px; }
.zoom { margin: 0 5px 0 3px; }
.angle input { width: 50px; }
.angle { margin-right: 5px; }
.page input { width: 40px; }
.page { margin: 0 2px 0 4px; }
.mode { width: 200px; margin-left: 9px; border: solid #4a4a4a; border-width: 0 1px; text-align: center; font-size: 10px; line-height: 21px; overflow: hidden; }
.hscroll { flex: 1; display: flex; align-items: center; background: #474747; padding: 0 3px; }
.hscroll span { width: 25px; height: 16px; margin: 0 auto; border-radius: 7px; background: #5f5f5f; }
.corner { width: 17px; flex: none; background: #4a4a4a; }

/* right dock */
.dock { flex: none; width: 291px; display: flex; flex-direction: column; border-left: 2px solid var(--line); }
.dock > .dock-head { padding: 0 5px 0 22px; }
.dockcols { flex: 1; display: flex; }
.iconcol { width: 38px; flex: none; border-right: 2px solid var(--line); }
.icongroup { display: flex; flex-direction: column; align-items: center; gap: 10px; padding-bottom: 7px; border-bottom: 1px solid var(--line); }
.icongroup .grip { margin: 3px 0 -3px; }
.panels { flex: 1; min-width: 0; }
.ptabs { display: flex; height: 27px; background: var(--dark); border-bottom: 1px solid var(--line); }
.ptabs button { padding: 0 9px; border-right: 1px solid var(--line); color: #a2a2a2; font-size: 10px; font-feature-settings: "palt"; }
.ptabs .kanji { padding: 0 8px; font-size: 12px; }
.ptabs .line { padding: 0 18px 0 10px; }
.ptabs .latin { font-size: 11px; }
.ptabs .on { display: flex; align-items: center; gap: 4px; height: 27px; padding: 0 8px 0 4px; background: var(--bg); color: var(--text); font-weight: 500; }
.ptabs .on svg { width: 8px; height: 12px; color: #aaa; }
.ptabs .burger { width: 20px; height: 20px; margin: 4px 1px 0 auto; color: #ccc; }
.ptabs.last button { padding: 0 10px; }
.guide { display: flex; align-items: center; gap: 10px; height: 45px; padding: 0 6px 3px; border-bottom: 3px solid var(--line); }
.base { width: 20px; height: 20px; margin-right: 4px; background: #fff; border: 1px solid #111; outline: 1px solid #111; outline-offset: -5px; }
.guide svg { color: #ccc; width: 17px; height: 17px; }
.alignpanel { height: 194px; padding: 0 5px 0 6px; border-bottom: 3px solid var(--line); }
.alignpanel section { height: 64px; padding-top: 9px; border-bottom: 1px solid #494949; }
.alignpanel .split { display: flex; height: 63px; border: 0; padding-top: 6px; }
.six { display: grid; grid-template-columns: 36px 36px 71px 36px 36px 18px; margin: 11px 0 0 3px; }
.six button { justify-self: start; }
.row { display: flex; align-items: center; gap: 14px; margin-top: 9px; }
.space { width: 139px; padding: 3px 0 0; border-right: 1px solid #474747; }
.space .row { padding-left: 3px; }
.target { padding: 3px 0 0 13px; }
.target .row { gap: 13px; }
.target .boxed { background: #565656; padding: 1px 3px; margin-right: -3px; }
.spin { display: flex; align-items: center; width: 62px; height: 20px; margin-left: -5px; padding-left: 5px; gap: 10px; background: #4e4e4e; color: #6c6c6c; }
.spin svg { width: 8px; height: 14px; }
.spin input, .rot input { width: 30px; color: #6c6c6c; }
.solo { margin-bottom: 4px; box-shadow: 0 3px var(--line); }

/* properties */
.props { padding: 0 12px 0 11px; }
.props section { border-bottom: 1px solid #484848; margin-left: -11px; padding-left: 11px; }
.phead { display: flex; justify-content: space-between; align-items: center; height: 34px; }
.phead .btn { width: 46px; height: 21px; line-height: 16px; }
.transform { height: 111px; padding-top: 12px; }
.tgrid { display: flex; align-items: center; gap: 9px; margin-top: 2px; }
.ref { width: 20px; height: 20px; }
.xy { display: grid; grid-template-columns: 21px 72px 25px 57px; grid-auto-rows: 26px; align-items: center; }
.xy input, .arow input { width: 57px; height: 21px; padding: 0 5px; background: #454545; border: 1px solid #5d5d5d; border-radius: 2px; }
.angrow { display: flex; align-items: center; gap: 11px; padding-left: 23px; color: #888; }
.angrow svg { width: 16px; height: 16px; }
.rot { display: flex; align-items: center; width: 58px; height: 22px; padding-left: 5px; background: #4e4e4e; }
.rot .chev { width: 12px; color: #6c6c6c; margin-left: 5px; }
.artboard { height: 156px; padding-top: 12px; }
.arow { display: flex; align-items: center; height: 20px; margin-top: 11px; }
.arow + .arow { margin-top: 9px; }
.arow label { width: 60px; }
.arow .an { padding-left: 12px; }
.arow input, .arow .select { width: 105px; height: 21px; }
.arow input { font-size: 11px; font-feature-settings: "palt"; }
.arow .ic { width: 31px; height: 20px; margin-left: 1px; }
.arow .select + .ic { width: 29px; margin-left: 5px; border-left: 1px solid #484848; }
.arow .ic.on { width: 29px; margin-left: 0; }
.check { display: flex; align-items: center; gap: 5px; height: 22px; padding-left: 5px; color: #c4c4c4; }
.arow + .check { margin-top: 18px; }
.check input { appearance: none; width: 12px; height: 12px; border: 1px solid #c4c4c4; border-radius: 2px; display: grid; place-items: center; }
.check input:checked { background: #c4c4c4; }
.check input:checked::after { content: ""; width: 3px; height: 6px; margin-bottom: 2px; border: solid #333; border-width: 0 2px 2px 0; transform: rotate(45deg); }
.props .quick { display: flex; flex-direction: column; gap: 10px; padding-top: 16px; border: 0; }
.quick .btn { height: 21px; line-height: 17px; }
```
